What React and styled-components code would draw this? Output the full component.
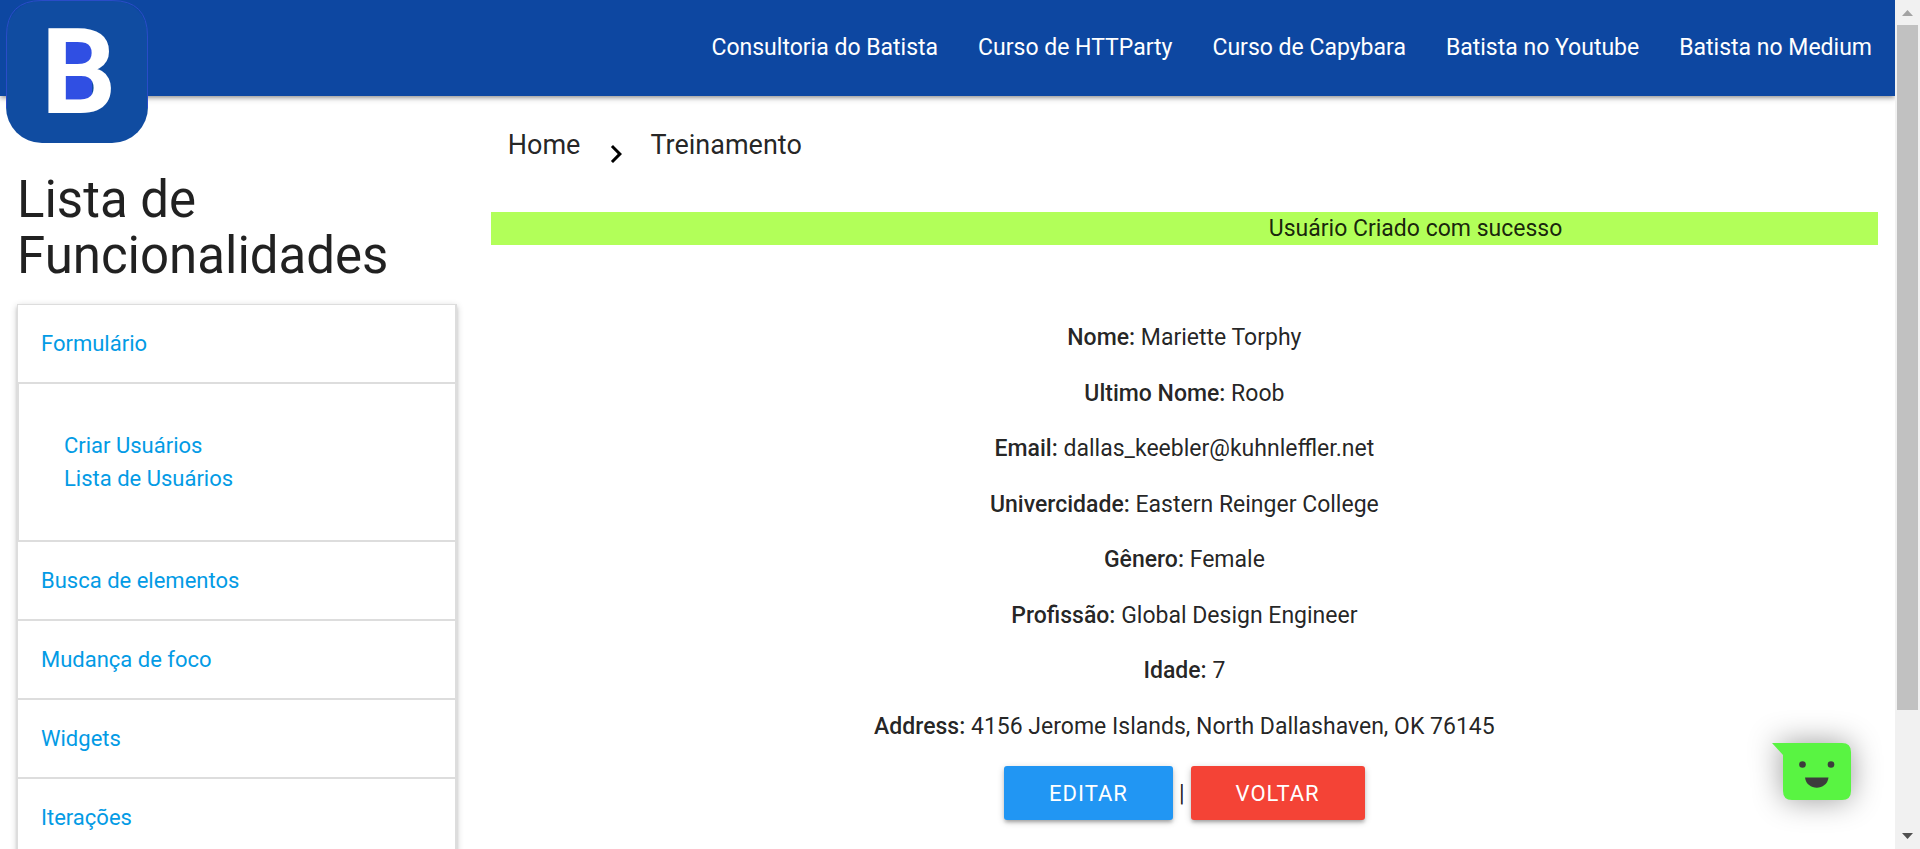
import React from "react";
import styled, { createGlobalStyle } from "styled-components";

const Global = createGlobalStyle`
  *, *::before, *::after { box-sizing: border-box; }
  body {
    margin: 0;
    background: #fff;
    color: rgba(0, 0, 0, 0.87);
    font-family: Roboto, "Liberation Sans", sans-serif;
    font-size: 23px;
    line-height: 33px;
  }
  a { color: inherit; text-decoration: none; }
`;

const Shell = styled.div`
  display: grid;
  grid-template-columns: minmax(0, 1fr) 25px;
  height: 100vh;
  overflow: hidden;
`;

const Page = styled.div`
  overflow: hidden;
`;

const Header = styled.header`
  display: flex;
  justify-content: space-between;
  align-items: flex-start;
  height: 96px;
  padding: 0 3px 0 6px;
  background: #0d47a1;
  color: #fff;
  box-shadow: 0 3px 3px rgba(0, 0, 0, 0.14), 0 4px 2px -3px rgba(0, 0, 0, 0.12),
    0 2px 7px rgba(0, 0, 0, 0.2);
`;

const LogoLink = styled.a`
  height: 143px;
  svg { display: block; }
`;

const NavLinks = styled.nav`
  display: flex;
`;

const NavLink = styled.a`
  padding: 0 20px;
  line-height: 96px;
`;

const Columns = styled.div`
  display: grid;
  grid-template-columns: 25% minmax(0, 1fr);
`;

const Sidebar = styled.aside`
  padding: 76px 17px 0;
`;

const SidebarTitle = styled.h1`
  margin: 0 0 20px;
  font-size: 51px;
  font-weight: 400;
  line-height: 56px;
`;

const Menu = styled.ul`
  margin: 0;
  padding: 0;
  list-style: none;
  font-size: 22px;
  color: #039be5;
  border: 1px solid #ddd;
  border-right-width: 2px;
  box-shadow: 0 3px 3px rgba(0, 0, 0, 0.14), 0 4px 2px -3px rgba(0, 0, 0, 0.12),
    0 2px 7px rgba(0, 0, 0, 0.2);
`;

const MenuItem = styled.li`
  border-bottom: 2px solid #ddd;
`;

const MenuLink = styled.a`
  display: block;
  padding: 22px 23px;
`;

const SubMenu = styled.ul`
  margin: 0;
  padding: 45px;
  list-style: none;
  border-top: 2px solid #ddd;
  border-left: 1px solid #ddd;
`;

const Main = styled.main`
  padding: 0 17px;
`;

const Breadcrumb = styled.nav`
  display: flex;
  align-items: center;
  height: 116px;
  padding: 0 17px 17px;
  font-size: 27px;
`;

const Chevron = styled.svg`
  width: 36px;
  height: 36px;
  margin: 17px 16px 0 18px;
`;

const Notice = styled.p`
  margin: 0 0 76px;
  padding-left: calc(100% / 3);
  background: #b2ff59;
  text-align: center;
`;

const Details = styled.div`
  display: flex;
  flex-direction: column;
  justify-content: space-between;
  min-height: 422px;
  text-align: center;
`;

const Detail = styled.p`
  margin: 0;
`;

const Label = styled.strong`
  font-weight: 500;
`;

const Actions = styled.div`
  display: flex;
  justify-content: center;
  align-items: center;
  gap: 6px;
  margin-top: 23px;
`;

const Button = styled.button`
  height: 54px;
  padding: 0 45px;
  border: 0;
  border-radius: 3px;
  background: ${(p) => p.$color};
  color: #fff;
  font: inherit;
  font-size: 22px;
  letter-spacing: 1px;
  text-transform: uppercase;
  box-shadow: 0 3px 3px rgba(0, 0, 0, 0.14), 0 4px 2px -3px rgba(0, 0, 0, 0.12),
    0 2px 7px rgba(0, 0, 0, 0.2);
`;

const ChatButton = styled.button`
  position: fixed;
  right: 69px;
  bottom: 49px;
  width: 79px;
  height: 57px;
  padding: 0;
  border: 0;
  background: none;
  svg { display: block; overflow: visible; filter: drop-shadow(0 0 15px rgba(0, 0, 0, 0.4)); }
`;

const ScrollTrack = styled.div`
  display: grid;
  grid-template-rows: 25px 6fr 1fr 25px;
  justify-items: center;
  background: #f1f1f1;
`;

const ScrollThumb = styled.div`
  width: 21px;
  background: #c1c1c1;
`;

const Arrow = styled.svg`
  grid-row: ${(p) => p.$row};
  width: 25px;
  height: 25px;
`;

const navItems = [
  "Consultoria do Batista",
  "Curso de HTTParty",
  "Curso de Capybara",
  "Batista no Youtube",
  "Batista no Medium",
];

const menuItems = [
  { name: "Formulário", children: ["Criar Usuários", "Lista de Usuários"] },
  { name: "Busca de elementos" },
  { name: "Mudança de foco" },
  { name: "Widgets" },
  { name: "Iterações" },
];

const user = [
  ["Nome", "Mariette Torphy"],
  ["Ultimo Nome", "Roob"],
  ["Email", "dallas_keebler@kuhnleffler.net"],
  ["Univercidade", "Eastern Reinger College"],
  ["Gênero", "Female"],
  ["Profissão", "Global Design Engineer"],
  ["Idade", "7"],
  ["Address", "4156 Jerome Islands, North Dallashaven, OK 76145"],
];

function Logo() {
  return (
    <svg width="142" height="143" viewBox="0 0 142 143">
      <rect width="142" height="143" rx="36" fill="#104ca1" />
      <path
        d="M.5 108V36Q.5 .5 36 .5H106Q141.500 .5 141.500 36V108"
        fill="none"
        stroke="#2a4cc8"
      />
      <rect x="51" y="38" width="35" height="66" fill="#304fe3" />
      <text x="35" y="113" fill="#fff" fontSize="118" fontWeight="700" fontFamily="Roboto, sans-serif">
        B
      </text>
    </svg>
  );
}

export default function App() {
  return (
    <>
      <Global />
      <Shell>
        <Page>
          <Header>
            <LogoLink href="#" aria-label="Batista">
              <Logo />
            </LogoLink>
            <NavLinks>
              {navItems.map((item) => (
                <NavLink key={item} href="#">{item}</NavLink>
              ))}
            </NavLinks>
          </Header>
          <Columns>
            <Sidebar>
              <SidebarTitle>Lista de Funcionalidades</SidebarTitle>
              <Menu>
                {menuItems.map(({ name, children }) => (
                  <MenuItem key={name}>
                    <MenuLink href="#">{name}</MenuLink>
                    {children && (
                      <SubMenu>
                        {children.map((child) => (
                          <li key={child}><a href="#">{child}</a></li>
                        ))}
                      </SubMenu>
                    )}
                  </MenuItem>
                ))}
              </Menu>
            </Sidebar>
            <Main>
              <Breadcrumb>
                <a href="#">Home</a>
                <Chevron viewBox="0 0 24 24" aria-hidden="true">
                  <path d="M10 6L8.590 7.410 13.170 12l-4.580 4.590L10 18l6-6z" />
                </Chevron>
                <a href="#">Treinamento</a>
              </Breadcrumb>
              <Notice>Usuário Criado com sucesso</Notice>
              <Details>
                {user.map(([label, value]) => (
                  <Detail key={label}>
                    <Label>{label}:</Label> {value}
                  </Detail>
                ))}
              </Details>
              <Actions>
                <Button type="button" $color="#2196f3">Editar</Button>
                <span>|</span>
                <Button type="button" $color="#f44336">Voltar</Button>
              </Actions>
            </Main>
          </Columns>
        </Page>
        <ScrollTrack aria-hidden="true">
          <Arrow $row={1} viewBox="0 0 25 25"><path d="M7 16h11l-5.500-6z" fill="#a3a3a3" /></Arrow>
          <ScrollThumb />
          <Arrow $row={4} viewBox="0 0 25 25"><path d="M7 9h11l-5.500 6z" fill="#505050" /></Arrow>
        </ScrollTrack>
      </Shell>
      <ChatButton type="button" aria-label="Chat">
        <svg width="79" height="57" viewBox="0 0 79 57">
          <path d="M0 0H70Q79 0 79 9V48Q79 57 70 57H20Q11 57 11 48V12Z" fill="#59f442" />
          <circle cx="30.500" cy="21.500" r="3.300" fill="#3c3c3c" />
          <circle cx="59" cy="21.500" r="3.300" fill="#3c3c3c" />
          <path d="M33 34.500H56.500C55 48 34.500 48 33 34.500Z" fill="#3c3c3c" />
        </svg>
      </ChatButton>
    </>
  );
}
